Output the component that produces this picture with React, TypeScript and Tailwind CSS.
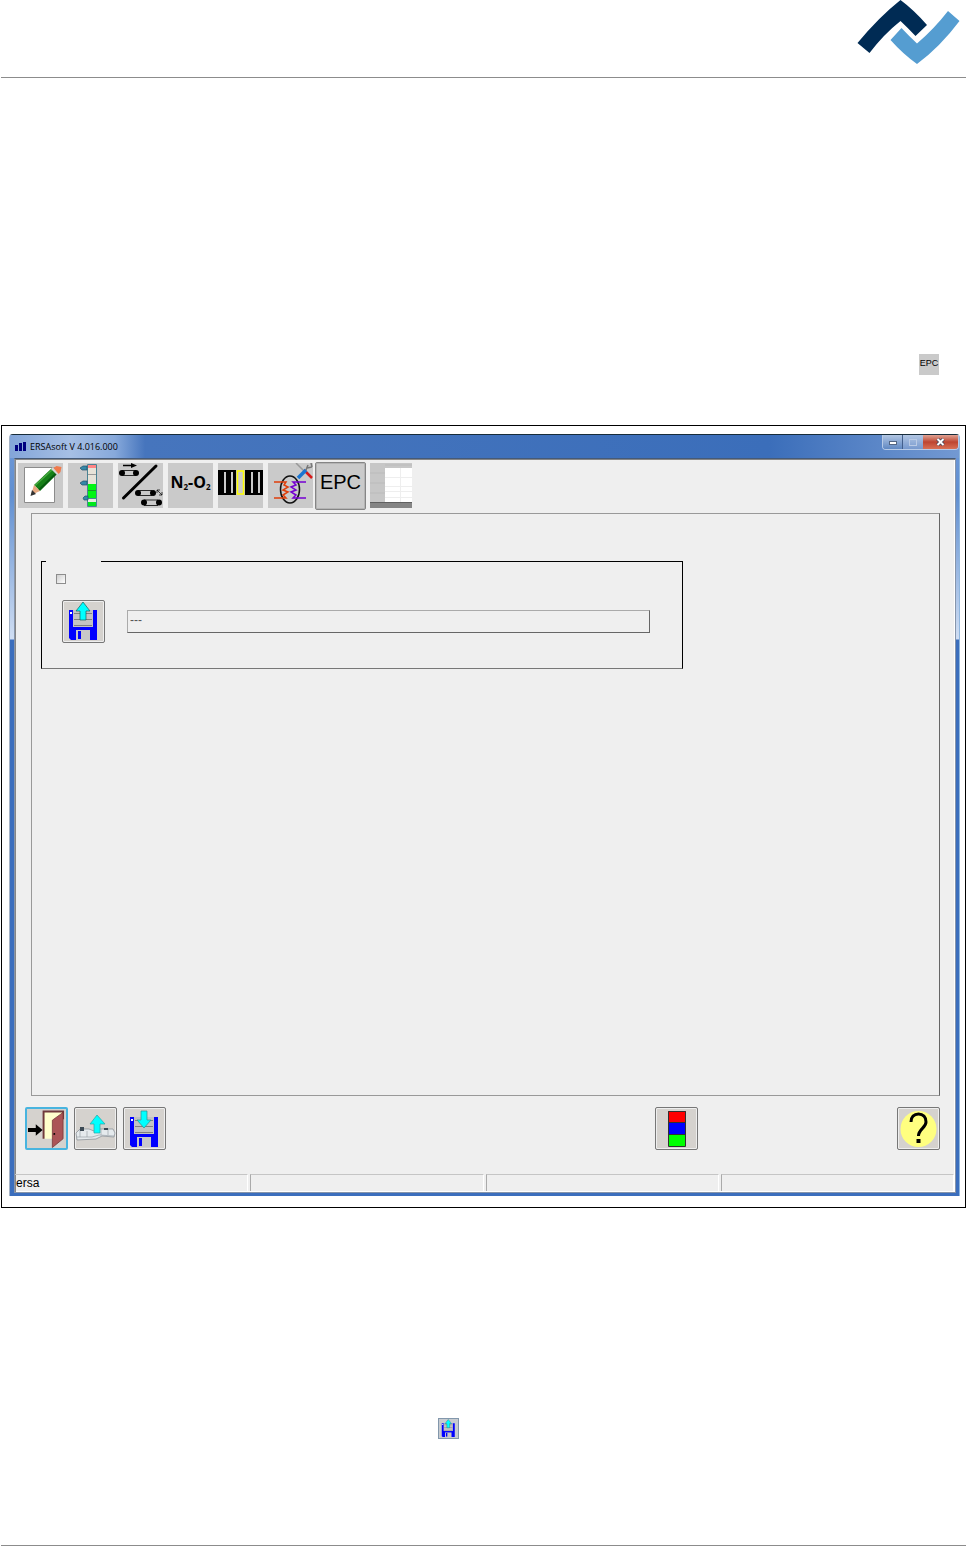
import { useState } from "react";
import type { ReactNode } from "react";

const Logo = () => (
  <svg width="104" height="66" viewBox="0 0 104 66">
    <path d="M0.5 43 Q22 17 43.500 0 Q57 10 70 25 L58.500 36 Q51 28 43.500 21 Q27 34 12.500 53 Z" fill="#002b54" />
    <path d="M33.500 40 L44.500 28 Q52 36 60 43.500 Q77 29 91 11 L102.500 21 Q83 47 60 64 Q46 54 33.500 40 Z" fill="#559dd1" />
  </svg>
);

// floppy disk, "up" for loading and "down" for saving
const Floppy = ({ down = false, className = "" }: { down?: boolean; className?: string }) => (
  <svg viewBox="0 0 41 41" className={className} aria-hidden="true">
    <path d="M6 9h28v30H8l-2-2z" fill="#0000ff" />
    <path d="M7 11h2v2H7z" fill="#fff" />
    <path d="M10 9h20v17H10z" fill="#c3c3c3" />
    <path d="M11 12.500h18M11 18.500h18M11 24.500h18" stroke="#808080" strokeWidth="1" />
    <path d="M13 29h14v10H13z" fill="#c8c8c8" />
    <path d="M15 30h3v8h-3z" fill="#0000ff" />
    {down ? (
      <path d="M17 3h6v9h4l-7 8-7-8h4z" fill="#00ffff" stroke="#2a8f8f" strokeWidth=".7" />
    ) : (
      <path d="M20 1l7 9h-4v9h-6v-9h-4z" fill="#00ffff" stroke="#146060" strokeWidth=".7" />
    )}
  </svg>
);

const PencilIcon = () => (
  <svg width="45" height="45" viewBox="0 0 45 45">
    <path d="M6.500 4.500h30v35h-30z" fill="#fff" stroke="#8c8c8c" />
    <path d="M16 22L34 5l6 5-18 18z" fill="#168018" />
    <path d="M17 22.500L35 6" stroke="#45a83e" strokeWidth="1.500" />
    <path d="M21 27L39 9.500" stroke="#075c10" strokeWidth="2" />
    <path d="M13 32l3-10 6 6z" fill="#e6a981" />
    <path d="M12.500 33l1.500-6 4 4z" fill="#333" />
    <path d="M33 6l2-2 6 6-2 2z" fill="#d6d6d6" />
    <path d="M35.500 5l3-2 5 1-1 5-2 2z" fill="#f07a4c" />
  </svg>
);

const ColumnIcon = () => (
  <svg width="45" height="45" viewBox="0 0 45 45">
    <path d="M19.500 1.500h9v34h-9z" fill="#e7e3d8" stroke="#4a8293" />
    <path d="M20 2h8v3h-8z" fill="#ff8585" />
    <path d="M20 11.500h8" stroke="#999" />
    <path d="M20 21h8v14h-8z" fill="#00f514" />
    <path d="M20 27.500h8" stroke="#189b28" />
    <path d="M19.500 35.500h9v8h-9z" fill="#e6eddf" stroke="#4a8293" />
    <path d="M20 39h8v4h-8z" fill="#00e81c" />
    <g fill="#3588a8" stroke="#20516a" strokeWidth=".7">
      <path d="M12 5l3-2h4v4h-5z" />
      <path d="M12 20l3-2h4v4h-5z" />
      <path d="M15 35l2-2h3v4h-4z" />
    </g>
  </svg>
);

const ConveyorIcon = () => (
  <svg width="45" height="45" viewBox="0 0 45 45" fill="none" stroke="#000">
    <path d="M5.500 35L38 3" strokeWidth="3" strokeLinecap="round" />
    <path d="M5 2.500h10" strokeWidth="1.500" />
    <path d="M13 0l6 2.500-6 2.500z" fill="#000" stroke="none" />
    <path d="M4 7.500h14M4 12.500h14M20 27.500h14M20 32.500h14M26 37h14M26 42.500h14" strokeWidth=".8" />
    <g fill="#000" stroke="none">
      <circle cx="4" cy="10" r="3" />
      <circle cx="18" cy="10" r="3" />
      <circle cx="20" cy="30" r="3" />
      <circle cx="35" cy="30" r="3" />
      <circle cx="26" cy="39.500" r="3" />
      <circle cx="41" cy="39.500" r="3" />
    </g>
    <path d="M39 30v-3h3M39 27l5 5M44 29v3h-3" strokeWidth=".7" />
  </svg>
);

const BarsIcon = () => (
  <svg width="45" height="45" viewBox="0 0 45 45">
    <path d="M0 7h45v25H0z" fill="#000" />
    <path d="M6 9h2v21H6zM13 9h2v21h-2zM33 9h2v21h-2zM40 9h2v21h-2z" fill="#cacaca" />
    <path d="M18 7h9v25h-9z" fill="#c5c5c5" />
    <path d="M19.500 8h6v23h-6z" fill="#cacaca" stroke="#ffff00" strokeWidth="1.500" />
  </svg>
);

const HeaterIcon = () => (
  <svg width="45" height="45" viewBox="0 0 45 45" fill="none">
    <ellipse cx="22" cy="26.500" rx="9.500" ry="13.500" stroke="#111" strokeWidth="1.500" />
    <path d="M6 19h12l-2 3 4 2-5 3 5 2-5 3 3 3H6" stroke="#df3f0c" strokeWidth="1.500" />
    <path d="M38 19H25l3 3-5 2 5 3-5 2 5 3-3 3h13" stroke="#7600d2" strokeWidth="1.500" />
    <path d="M28 0l9 9" stroke="#999" strokeWidth="1.500" />
    <path d="M36 7l8 8" stroke="#d71919" strokeWidth="2.500" />
    <path d="M30 15l8-8" stroke="#1975d2" strokeWidth="3.500" />
    <path d="M38 7l2-5M39 5l5-1M43 0l1 4" stroke="#777" strokeWidth="1.500" />
  </svg>
);

const GridIcon = () => (
  <svg width="42" height="45" viewBox="0 0 42 45">
    <path d="M0 0h42v45H0z" fill="#c7c7c7" />
    <path d="M15 5h27v35H15z" fill="#fff" />
    <path d="M15 14.500h27M15 23.500h27M15 28.500h27M15 34.500h27M30.500 5v35" stroke="#eee" />
    <path d="M0 10h15M0 20h15M0 30h15M15 2h27" stroke="#b7b7b7" strokeWidth=".6" />
    <path d="M0 40h42v5H0z" fill="#858585" />
    <path d="M0 39.500h42" stroke="#606060" />
  </svg>
);

const DoorIcon = () => (
  <svg width="40" height="40" viewBox="0 0 40 40">
    <path d="M17 2h20v28H17z" fill="#ffffcc" />
    <path d="M17 30V2h20v8" fill="none" stroke="#70393b" strokeWidth="2" />
    <path d="M26 11L37 3v27L26 39z" fill="#ab5456" stroke="#753638" strokeWidth=".8" />
    <circle cx="28" cy="25" r="1" fill="#000" />
    <path d="M1 19h8v-4l7 6-7 6v-4H1z" fill="#000" />
  </svg>
);

const MachineIcon = () => (
  <svg width="41" height="41" viewBox="0 0 41 41">
    <path d="M1 25l4-4h9l5 2 5-2h14l2 4-1 4-12-1-6 3-19 1z" fill="#e5eaed" stroke="#828a91" strokeWidth=".7" />
    <path d="M2 29h15l7-2 15 1M5 21v8M12 23v6M26 21v6M33 21v6" fill="none" stroke="#9ba3ab" strokeWidth=".7" />
    <path d="M5 19h4v4H5zM29 20h4v2h-4z" fill="#3c4954" />
    <path d="M22 7l8 9h-5v9h-6v-9h-4z" fill="#00ffff" stroke="#2aa5a5" strokeWidth=".7" />
  </svg>
);

const LampIcon = () => (
  <svg width="41" height="41" viewBox="0 0 41 41">
    <path d="M12 3h18v12H12z" fill="#ff0000" />
    <path d="M12 15h18v12H12z" fill="#0000ff" />
    <path d="M12 27h18v11H12z" fill="#00ff00" />
    <path d="M12.500 3.500h17v35h-17zM12 14.500h18M12 26.500h18" fill="none" stroke="#303030" />
  </svg>
);

const HelpIcon = () => (
  <svg width="41" height="41" viewBox="0 0 41 41" fill="none">
    <circle cx="20.500" cy="21" r="18" fill="#ffff80" />
    <path d="M13 14c0-5 3-8 7.500-8s7.500 3 7.500 8c0 6-7.500 7-7.500 14" stroke="#000" strokeWidth="3" />
    <path d="M18.500 31h4v4h-4z" fill="#000" />
  </svg>
);

const tools: { label: string; icon: ReactNode }[] = [
  { label: "Edit", icon: <PencilIcon /> },
  { label: "Level", icon: <ColumnIcon /> },
  { label: "Conveyor", icon: <ConveyorIcon /> },
  {
    label: "Nitrogen and oxygen",
    icon: (
      <span className="whitespace-nowrap pb-2 font-['Open_Sans',sans-serif] text-base/5 font-bold">
        N<sub className="text-[8px]">2</sub>-O<sub className="text-[8px]">2</sub>
      </span>
    ),
  },
  { label: "Zones", icon: <BarsIcon /> },
  { label: "Heating", icon: <HeaterIcon /> },
];

const ActionButton = ({ label, active = false, children }: { label: string; active?: boolean; children: ReactNode }) => (
  <button
    type="button"
    aria-label={label}
    className={
      active
        ? "flex size-[43px] items-center justify-center overflow-hidden rounded-xs border-2 border-[#48b4df] bg-[#d5d2ce]"
        : "flex size-[43px] items-center justify-center overflow-hidden rounded-xs border border-[#777] bg-[#d5d2ce] shadow-[inset_0_0_0_1px_#eee]"
    }
  >
    {children}
  </button>
);

const App = () => {
  const [enabled, setEnabled] = useState(false);

  return (
    <div className="flex min-h-screen flex-col bg-white pl-px font-['Liberation_Sans',sans-serif] text-black">
      <header className="flex h-[78px] items-start justify-end border-b border-[#8c8c8c] pr-[5px]">
        <Logo />
      </header>

      <main className="flex-1">
        <div className="flex h-[347px] items-end justify-end pr-[27px] pb-[50px]">
          <span className="h-[21px] w-5 bg-[#cacaca] pt-1 text-center text-[9px]/[10px]">EPC</span>
        </div>

        <div className="border border-black pt-2 pr-[5px] pb-[11px] pl-[7px]">
          {/* application window */}
          <div className="rounded-t-sm border-t border-r border-l border-t-[#172c3a] border-r-[#8fb6de] border-l-[#a5b3c6] bg-[linear-gradient(#6f99d8_0px,#608fd1_60px,#d0def3_204px,#3b6ebd_205px)] pr-[3px] pb-[3px] pl-1">
            <div className="-mr-[3px] -ml-1 flex h-[23px] justify-between bg-[linear-gradient(90deg,#83a5d9,#a6bfe4_60px,#87a9db_105px,#4675bd_135px,#3b6eba_80%,#7399d2)] pl-[5px]">
              <div className="flex items-center gap-1 text-[9px]">
                <svg width="11" height="9" viewBox="0 0 11 9" fill="#000080">
                  <path d="M0 3h3v6H0zM4 1h3v8H4zM8 0h3v9H8z" />
                </svg>
                <h1 className="font-['Open_Sans',sans-serif]">ERSAsoft V 4.016.000</h1>
              </div>
              <div className="flex h-[15px] overflow-hidden rounded-b-sm border border-t-0 border-[#b8cbe7]">
                <button type="button" aria-label="Minimize" className="flex w-5 items-end justify-center border-r border-[#435f8c] bg-linear-to-b from-[#b2c6e3] to-[#6088c2] pb-1">
                  <span className="h-1 w-2 border border-[#536684] bg-white" />
                </button>
                <button type="button" aria-label="Maximize" className="flex w-5 items-center justify-center bg-linear-to-b from-[#b2c6e3] to-[#7799ce]">
                  <span className="h-[7px] w-2 border border-[#b9cae5]" />
                </button>
                <button type="button" aria-label="Close" className="flex w-[35px] items-center justify-center bg-linear-to-b from-[#dfa294] via-[#bd4430] to-[#d87055]">
                  <svg width="9" height="8" viewBox="0 0 9 8">
                    <path d="M1.500 1l6 6M7.500 1l-6 6" stroke="#3e4258" strokeWidth="3.500" />
                    <path d="M1.500 1l6 6M7.500 1l-6 6" stroke="#fff" strokeWidth="2" />
                  </svg>
                </button>
              </div>
            </div>

            <div className="border border-[#8795aa] border-t-[#455a78] bg-[#efefef] shadow-[inset_1px_1px_0_#858585,inset_-1px_-1px_0_#fff]">
              <nav className="flex h-[54px] items-start pt-[3px] pl-[3px]">
                <div className="flex gap-[5px] pt-px pr-[2px]">
                  {tools.map((tool) => (
                    <button key={tool.label} type="button" aria-label={tool.label} className="flex size-[45px] items-center justify-center overflow-hidden bg-[#cacaca]">
                      {tool.icon}
                    </button>
                  ))}
                </div>
                <button type="button" className="h-12 w-[51px] rounded-xs border border-[#858585] bg-[#cacaca] pb-2 text-xl/8 shadow-[inset_0_0_0_1px_#b4b4b4]">
                  EPC
                </button>
                <button type="button" aria-label="Table" className="ml-1 pt-px">
                  <GridIcon />
                </button>
              </nav>

              <section className="mr-[15px] ml-4 min-h-[583px] border border-[#999] border-r-[#666] px-[9px] pt-[47px]">
                <fieldset className="h-[108px] max-w-[642px] border border-black border-b-[#777] px-[14px]">
                  <legend className="-ml-[10px] h-px w-[55px]" />
                  <label className="flex h-[38px] items-start pt-3">
                    <input
                      type="checkbox"
                      aria-label="Enable"
                      checked={enabled}
                      onChange={(e) => setEnabled(e.target.checked)}
                      className="size-[10px] appearance-none border border-[#8d8d8d] bg-linear-to-br from-[#cfcfcf] to-white checked:bg-[#3b6ebd]"
                    />
                  </label>
                  <div className="flex items-center gap-[22px] pl-[6px]">
                    <ActionButton label="Load file">
                      <Floppy className="size-[41px]" />
                    </ActionButton>
                    <input
                      type="text"
                      aria-label="File"
                      readOnly
                      value="---"
                      className="h-[23px] w-[523px] border border-[#aaa] border-r-[#666] border-b-[#666] pb-1 pl-[2px] text-xs text-[#555]"
                    />
                  </div>
                </fieldset>
              </section>

              <div className="mt-[11px] mr-[15px] ml-[10px] flex">
                <div className="flex gap-[6px]">
                  <ActionButton label="Exit" active>
                    <DoorIcon />
                  </ActionButton>
                  <ActionButton label="Load from machine">
                    <MachineIcon />
                  </ActionButton>
                  <ActionButton label="Save">
                    <Floppy down className="size-[41px]" />
                  </ActionButton>
                </div>
                <div className="ml-auto flex gap-[199px]">
                  <ActionButton label="Signal lamp">
                    <LampIcon />
                  </ActionButton>
                  <ActionButton label="Help">
                    <HelpIcon />
                  </ActionButton>
                </div>
              </div>

              <footer className="mt-6 mr-px mb-[2px] grid h-4 grid-cols-4 gap-[2px] text-xs/4">
                <div className="border-t border-r border-t-[#c5c5c5] border-r-white pl-px">ersa</div>
                <div className="border-t border-r border-l border-t-[#c5c5c5] border-r-white border-l-[#aaa]" />
                <div className="border-t border-r border-l border-t-[#c5c5c5] border-r-white border-l-[#aaa]" />
                <div className="border-t border-r border-l border-t-[#c5c5c5] border-r-white border-l-[#aaa]" />
              </footer>
            </div>
          </div>
        </div>

        <div className="flex h-[231px] items-end pl-[437px]">
          <Floppy className="h-[21px] w-[21px] border border-[#8297ac] bg-[#c7cbd0]" />
        </div>
      </main>

      <footer className="border-b border-[#8c8c8c]" />
    </div>
  );
};

export default App;
